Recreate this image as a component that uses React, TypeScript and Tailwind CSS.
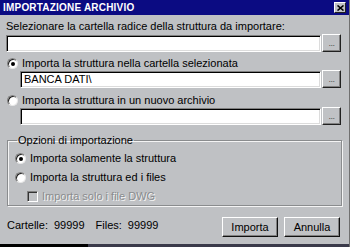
import type { ReactNode } from 'react';

// Classic Win9x style import dialog

const FONT = { fontFamily: '"Liberation Sans", Arial, sans-serif' };

function Sunken({ children, className = '' }: { children?: ReactNode; className?: string }) {
  return (
    <div
      className={`h-[17px] bg-white border border-t-[#808080] border-l-[#808080] border-b-white border-r-white shadow-[inset_1px_1px_0_#000,inset_-1px_-1px_0_#dcdcdc] flex items-center px-[3px] text-[11px] text-black ${className}`}
    >
      {children}
    </div>
  );
}

function DotsButton() {
  return (
    <div className="w-[19px] h-[18px] bg-[#c0c2c5] border border-t-white border-l-white border-b-[#202020] border-r-[#202020] shadow-[inset_-1px_-1px_0_#808080] flex items-end justify-center pb-[3px] text-[9px] leading-none text-[#505050] tracking-[-0.5px]">
      ...
    </div>
  );
}

function Radio({ checked, label }: { checked?: boolean; label: string }) {
  return (
    <div className="flex items-center gap-[4px] h-[14px]">
      <span className="relative w-[11px] h-[11px] rounded-full bg-white border border-t-[#808080] border-l-[#808080] border-b-[#e8e8e8] border-r-[#e8e8e8] shadow-[inset_1px_1px_0_#222]">
        {checked && (
          <span className="absolute left-[3px] top-[3px] w-[4px] h-[4px] rounded-full bg-black" />
        )}
      </span>
      <span className="text-[11px] text-black">{label}</span>
    </div>
  );
}

function PushButton({ label }: { label: string }) {
  return (
    <div className="w-[56px] h-[20px] bg-[#c0c2c5] border border-t-white border-l-white border-b-[#101010] border-r-[#101010] shadow-[inset_-1px_-1px_0_#808080] flex items-center justify-center text-[11px] text-black">
      {label}
    </div>
  );
}

export default function App() {
  return (
    <div
      style={FONT}
      className="w-[350px] h-[247px] bg-[#bfc1c4] flex flex-col overflow-hidden border-r border-r-[#707070]"
    >
      {/* Title bar */}
      <div className="h-[15px] bg-[#0b0b82] flex items-center justify-between pl-[3px] pr-[3px]">
        <span className="text-white font-bold text-[10px] tracking-[0.2px]">IMPORTAZIONE ARCHIVIO</span>
        <div className="w-[12px] h-[11px] bg-[#c0c2c5] border border-t-white border-l-white border-b-[#202020] border-r-[#202020] flex items-center justify-center">
          <svg width="7" height="6" viewBox="0 0 7 6">
            <path d="M0.5 0.5 L6.5 5.5 M6.5 0.5 L0.5 5.5" stroke="#000" strokeWidth="1.6" />
          </svg>
        </div>
      </div>

      <div className="flex-1 flex flex-col pl-[6px] pr-[3px]">
        <div className="mt-[5px] text-[11px] text-black leading-[13px]">
          Selezionare la cartella radice della struttura da importare:
        </div>
        <div className="mt-[1px] flex items-center gap-[1px] pr-[5px]">
          <Sunken className="flex-1" />
          <DotsButton />
        </div>

        <div className="mt-[4px] pl-[1px]">
          <Radio checked label="Importa la struttura nella cartella selezionata" />
        </div>
        <div className="flex items-center gap-[1px] pl-[14px] pr-[5px]">
          <Sunken className="flex-1">BANCA DATI\</Sunken>
          <DotsButton />
        </div>

        <div className="mt-[5px] pl-[1px]">
          <Radio label="Importa la struttura in un nuovo archivio" />
        </div>
        <div className="flex items-center gap-[1px] pl-[14px] pr-[5px]">
          <Sunken className="flex-1" />
          <DotsButton />
        </div>

        {/* Group box */}
        <fieldset className="mt-[9px] mr-[4px] ml-[1px] h-[72px] border border-[#8a8c8e] shadow-[1px_1px_0_#f4f4f4,inset_1px_1px_0_#f4f4f4] px-[7px] pt-[1px]">
          <legend className="ml-[2px] px-[1px] text-[11px] text-black leading-[12px]">Opzioni di importazione</legend>
          <div className="flex flex-col gap-[5px] mt-[4px]">
            <Radio checked label="Importa solamente la struttura" />
            <Radio label="Importa la struttura ed i files" />
            <div className="flex items-center gap-[4px] h-[14px] pl-[12px]">
              <span className="w-[11px] h-[11px] bg-[#c0c2c5] border border-t-[#808080] border-l-[#808080] border-b-white border-r-white shadow-[inset_1px_1px_0_#333]" />
              <span className="text-[11px] text-[#8a8c8e] [text-shadow:1px_1px_0_#f4f4f4]">Importa solo i file DWG</span>
            </div>
          </div>
        </fieldset>

        <div className="mt-[11px] flex items-center pr-[6px]">
          <div className="flex-1 text-[11px] text-black flex pl-[1px] -mt-[3px]">
            <span>Cartelle:</span>
            <span className="ml-[6px]">99999</span>
            <span className="ml-[11px]">Files:</span>
            <span className="ml-[6px]">99999</span>
          </div>
          <div className="flex gap-[6px]">
            <PushButton label="Importa" />
            <PushButton label="Annulla" />
          </div>
        </div>
      </div>

      {/* bottom edge */}
      <div className="h-[3px] flex">
        <div className="w-[88px] bg-black" />
        <div className="flex-1 bg-[#3a3a4a]" />
      </div>
    </div>
  );
}
